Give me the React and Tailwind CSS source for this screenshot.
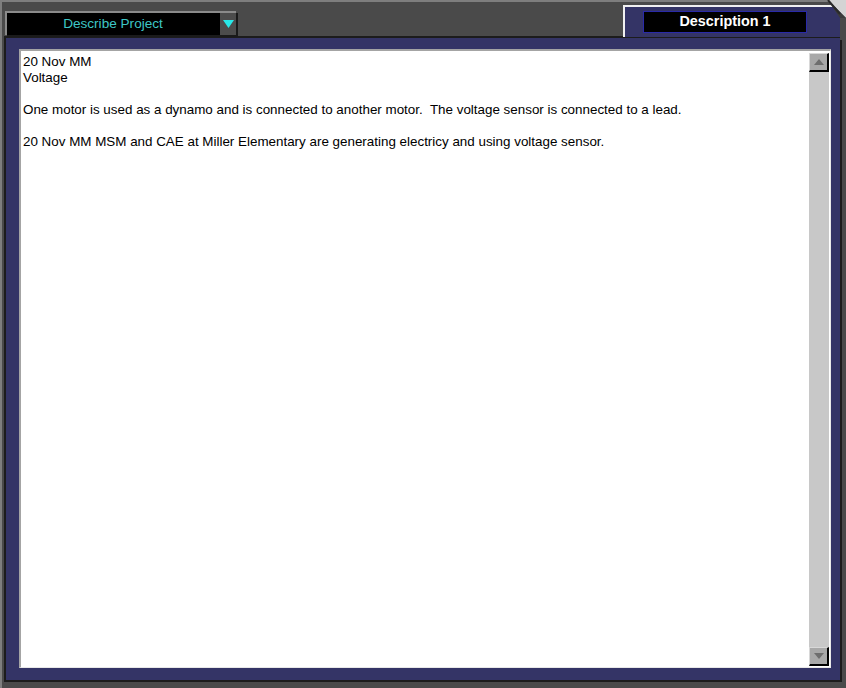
import React from 'react';

const lines = [
  '20 Nov MM',
  'Voltage',
  '',
  'One motor is used as a dynamo and is connected to another motor.  The voltage sensor is connected to a lead.',
  '',
  '20 Nov MM MSM and CAE at Miller Elementary are generating electricy and using voltage sensor.',
];

function ScrollButton({ up }) {
  return (
    <div className="h-[19px] w-[20px] bg-[#a8a8a8] border-t border-l border-[#d8d8d8] border-r-2 border-b-2 border-r-black border-b-black flex items-center justify-center">
      <svg width="10" height="6" viewBox="0 0 10 6">
        {up ? <polygon points="5,0 10,6 0,6" fill="#6e6e6e" /> : <polygon points="0,0 10,0 5,6" fill="#6e6e6e" />}
      </svg>
    </div>
  );
}

export default function App() {
  return (
    <div
      className="w-[846px] h-[688px] bg-[#4a4a4a] border-t-2 border-l-2 border-[#7e7e7e] flex flex-col"
      style={{ fontFamily: '"Liberation Sans", Arial, sans-serif' }}
    >
      {/* top bar */}
      <div className="h-[34px] flex justify-between items-start pl-[3px] relative">
        <div className="mt-[9px] w-[231px] h-[24px] flex border-l-2 border-t-2 border-[#8a8a8a] shadow-[2px_2px_0_#1a1a1a]">
          <div className="flex-1 bg-black flex items-center justify-center text-[13.6px] text-[#3ec6c6]">
            Describe Project
          </div>
          <div className="w-[17px] bg-[#4c4c4c] border-l border-black flex items-center justify-center">
            <svg width="11" height="8" viewBox="0 0 11 8">
              <polygon points="0,0 11,0 5.5,8" fill="#28e8e8" />
            </svg>
          </div>
        </div>
        <div className="mt-[3px] w-[219px] h-[32px] bg-[#343466] border-l-2 border-t-2 border-[#f0f0f0] flex items-start justify-start pl-[18px] pt-[4px] mr-[4px]">
          <div className="w-[164px] h-[22px] bg-black border border-[#2a2aa8] flex items-center justify-center text-white font-bold text-[14.4px]">
            Description 1
          </div>
        </div>
        <svg className="absolute right-0 top-[-2px]" width="20" height="40" viewBox="0 0 20 40">
          <polygon points="2,0 20,0 20,18" fill="#d4d4d4" />
          <polygon points="2,0 20,18 20,40 14,40 14,18" fill="#3c3c3c" />
          <line x1="2" y1="0" x2="14" y2="14" stroke="#2a2a2a" strokeWidth="2" />
          <rect x="14" y="18" width="6" height="22" fill="#4a4a4a" />
        </svg>
      </div>

      {/* panel */}
      <div className="ml-[2px] mr-[4px] h-[646px] border-2 border-[#1c1c1c] bg-[#343466] pt-[11px] pl-[13px] pr-[9px] pb-[12px] flex">
        <div className="flex-1 bg-white border-l-2 border-t-2 border-[#a4a4a4] border-r border-b border-r-[#e8e8e8] border-b-[#e8e8e8] flex">
          <div className="flex-1 pl-[2px] pt-[3px] text-[13.4px] leading-[16px] text-black whitespace-pre-wrap">
            {lines.map((l, i) => (
              <div key={i} className="h-[16px]">{l}</div>
            ))}
          </div>
          <div className="w-[20px] mr-[1px] mt-[2px] mb-[1px] bg-[#c8c8c8] flex flex-col justify-between">
            <ScrollButton up />
            <ScrollButton />
          </div>
        </div>
      </div>
    </div>
  );
}
